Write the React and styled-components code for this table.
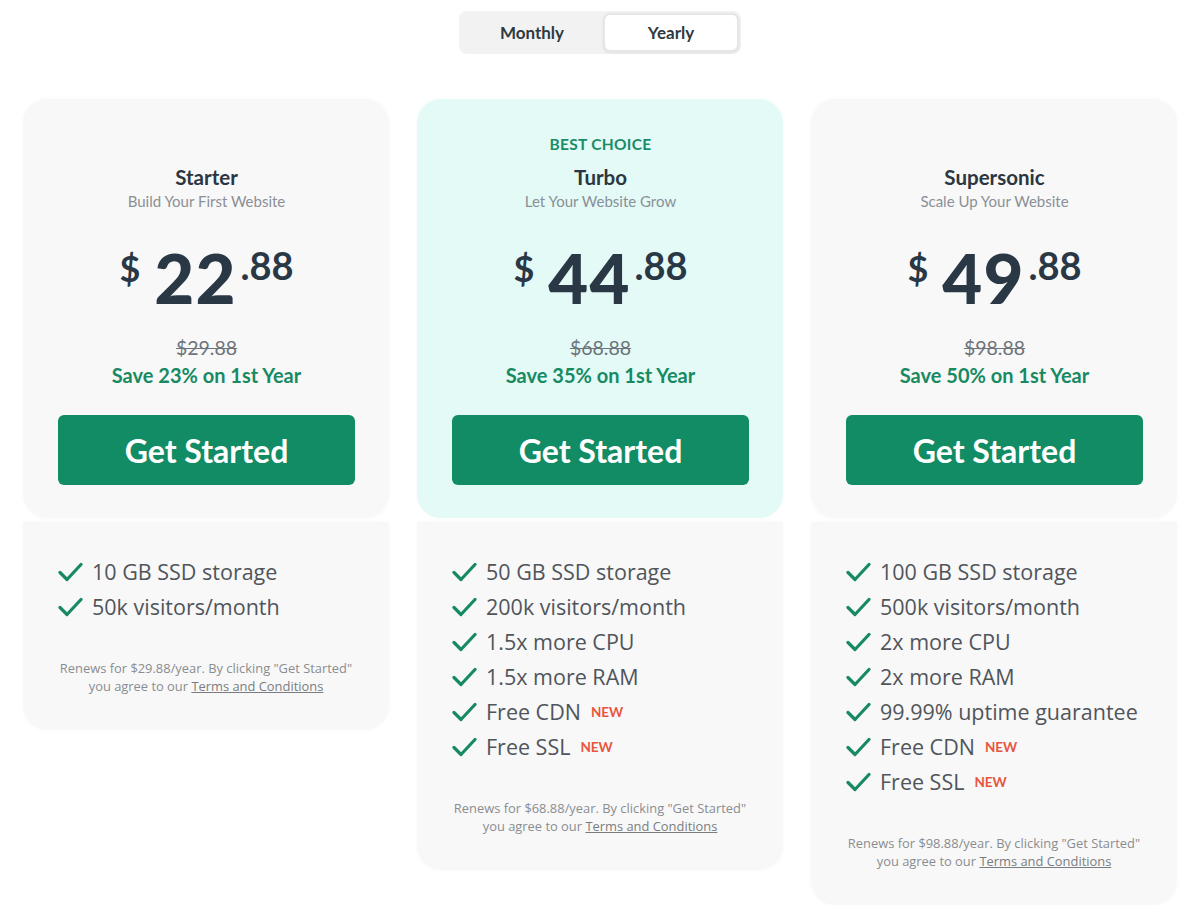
import React from "react";
import styled, { createGlobalStyle } from "styled-components";

const GlobalStyle = createGlobalStyle`
    body {
        margin: 0;
        background: #fff;
        font-family: "Open Sans", "Liberation Sans", sans-serif;
        color: #2b3640;
    }
`

const Page = styled.div`
    display: flex;
    flex-direction: column;
    align-items: center;
    padding-top: 11px;
`
const Toggle = styled.div`
    display: flex;
    padding: 2px;
    background: #f2f2f2;
    border-radius: 8px;
    width: 282px;
    box-sizing: border-box;
`
const ToggleOption = styled.div`
    flex: ${p => p.$active ? '0 0 136px' : '1'};
    height: 39px;
    display: flex;
    align-items: center;
    justify-content: center;
    font-family: "Lato", sans-serif;
    font-weight: 700;
    font-size: 17px;
    color: #2f3a40;
    border-radius: 7px;
    background: ${p => p.$active ? '#fff' : 'transparent'};
    border: ${p => p.$active ? '2px solid #e4e6e8' : 'none'};
    box-shadow: ${p => p.$active ? '0 1px 3px rgba(0,0,0,0.08)' : 'none'};
    box-sizing: border-box;
`
const Plans = styled.div`
    display: grid;
    grid-template-columns: repeat(3, 366px);
    gap: 28px;
    margin-top: 45px;
    align-items: start;
`
const Card = styled.div`
    display: flex;
    flex-direction: column;
    gap: 4px;
`
const Top = styled.div`
    background: ${p => p.$featured ? '#e3faf7' : '#f8f8f8'};
    border-radius: 24px;
    padding: 35px 34px 33px 35px;
    display: flex;
    flex-direction: column;
    align-items: center;
    box-shadow: 0 0 6px rgba(0,0,0,0.025);
`
const Badge = styled.div`
    font-family: "Lato", sans-serif;
    font-weight: 700;
    font-size: 15.5px;
    letter-spacing: 0.3px;
    line-height: 20px;
    color: #1a8c68;
    visibility: ${p => p.$hidden ? 'hidden' : 'visible'};
`
const Title = styled.div`
    font-family: "Lato", sans-serif;
    font-weight: 700;
    font-size: 20.5px;
    line-height: 24px;
    margin-top: 11px;
    color: #2b3640;
`
const Subtitle = styled.div`
    font-family: "Lato", sans-serif;
    font-size: 15px;
    line-height: 20px;
    color: #8a9096;
    margin-top: 2px;
`
const Price = styled.div`
    display: flex;
    align-items: flex-start;
    margin-top: 41px;
    height: 57px;
    color: #2a3846;
    font-family: "Lato", sans-serif;
    font-weight: 700;
`
const Currency = styled.span`
    font-size: 36px;
    line-height: 36px;
    margin-top: -2px;
    margin-right: 14px;
`
const Amount = styled.span`
    font-size: 69px;
    line-height: 62px;
    margin-top: -5px;
    letter-spacing: 1px;
    font-weight: 900;
`
const Cents = styled.span`
    font-size: 38px;
    line-height: 36px;
    margin-top: -5px;
    margin-left: 4px;
`
const OldPrice = styled.div`
    margin-top: 27px;
    font-family: "Lato", sans-serif;
    font-size: 19.5px;
    line-height: 24px;
    color: #6d7378;
    text-decoration: line-through;
`
const Save = styled.div`
    margin-top: 3px;
    font-family: "Lato", sans-serif;
    font-weight: 700;
    font-size: 20px;
    line-height: 24px;
    color: #178a62;
`
const Button = styled.button`
    margin-top: 28px;
    width: 297px;
    height: 70px;
    border: none;
    border-radius: 6px;
    background: #128c64;
    color: #fff;
    font-family: "Lato", sans-serif;
    font-weight: 700;
    font-size: 32px;
    cursor: pointer;
`
const Bottom = styled.div`
    background: #f8f8f8;
    border-radius: 0 0 24px 24px;
    padding: 32px 20px 35px 35px;
    box-shadow: 0 0 6px rgba(0,0,0,0.025);
`
const Features = styled.ul`
    list-style: none;
    margin: 0;
    padding: 0;
`
const Feature = styled.li`
    display: flex;
    align-items: center;
    gap: 9px;
    height: 35px;
    font-size: 21.5px;
    color: #50555b;
`
const New = styled.span`
    font-family: "Lato", sans-serif;
    font-weight: 700;
    font-size: 13.5px;
    color: #e8553e;
    margin-left: 10px;
    position: relative;
    top: -3px;
`
const Note = styled.p`
    margin: 35px 0 0;
    padding-right: 15px;
    text-align: center;
    font-size: 12.9px;
    line-height: 18px;
    color: #8a8d90;
    a {
        color: #7a7d80;
        text-decoration: underline;
    }
`

const Check = () => (
    <svg width="25" height="22" viewBox="0 0 25 22" fill="none">
        <path d="M2 11.5 L9 18.5 L23 3.5" stroke="#178a62" strokeWidth="3.2" strokeLinecap="round" strokeLinejoin="round" />
    </svg>
)

const plans = [
    {
        name: 'Starter', sub: 'Build Your First Website', amount: '22', old: '$29.88', save: '23%', renew: '$29.88',
        features: ['10 GB SSD storage', '50k visitors/month']
    },
    {
        name: 'Turbo', sub: 'Let Your Website Grow', amount: '44', old: '$68.88', save: '35%', renew: '$68.88', featured: true,
        features: ['50 GB SSD storage', '200k visitors/month', '1.5x more CPU', '1.5x more RAM', ['Free CDN'], ['Free SSL']]
    },
    {
        name: 'Supersonic', sub: 'Scale Up Your Website', amount: '49', old: '$98.88', save: '50%', renew: '$98.88',
        features: ['100 GB SSD storage', '500k visitors/month', '2x more CPU', '2x more RAM', '99.99% uptime guarantee', ['Free CDN'], ['Free SSL']]
    },
]

export default function App() {
    return (
        <Page>
            <GlobalStyle />
            <Toggle>
                <ToggleOption>Monthly</ToggleOption>
                <ToggleOption $active>Yearly</ToggleOption>
            </Toggle>
            <Plans>
                {plans.map(plan => (
                    <Card key={plan.name}>
                        <Top $featured={plan.featured}>
                            <Badge $hidden={!plan.featured}>BEST CHOICE</Badge>
                            <Title>{plan.name}</Title>
                            <Subtitle>{plan.sub}</Subtitle>
                            <Price>
                                <Currency>$</Currency>
                                <Amount>{plan.amount}</Amount>
                                <Cents>.88</Cents>
                            </Price>
                            <OldPrice>{plan.old}</OldPrice>
                            <Save>Save {plan.save} on 1st Year</Save>
                            <Button>Get Started</Button>
                        </Top>
                        <Bottom>
                            <Features>
                                {plan.features.map(f => {
                                    const isNew = Array.isArray(f)
                                    const text = isNew ? f[0] : f
                                    return (
                                        <Feature key={text}>
                                            <Check />
                                            <span>
                                                {text}
                                                {isNew && <New>NEW</New>}
                                            </span>
                                        </Feature>
                                    )
                                })}
                            </Features>
                            <Note>
                                Renews for {plan.renew}/year. By clicking "Get Started"<br />
                                you agree to our <a>Terms and Conditions</a>
                            </Note>
                        </Bottom>
                    </Card>
                ))}
            </Plans>
        </Page>
    )
}
